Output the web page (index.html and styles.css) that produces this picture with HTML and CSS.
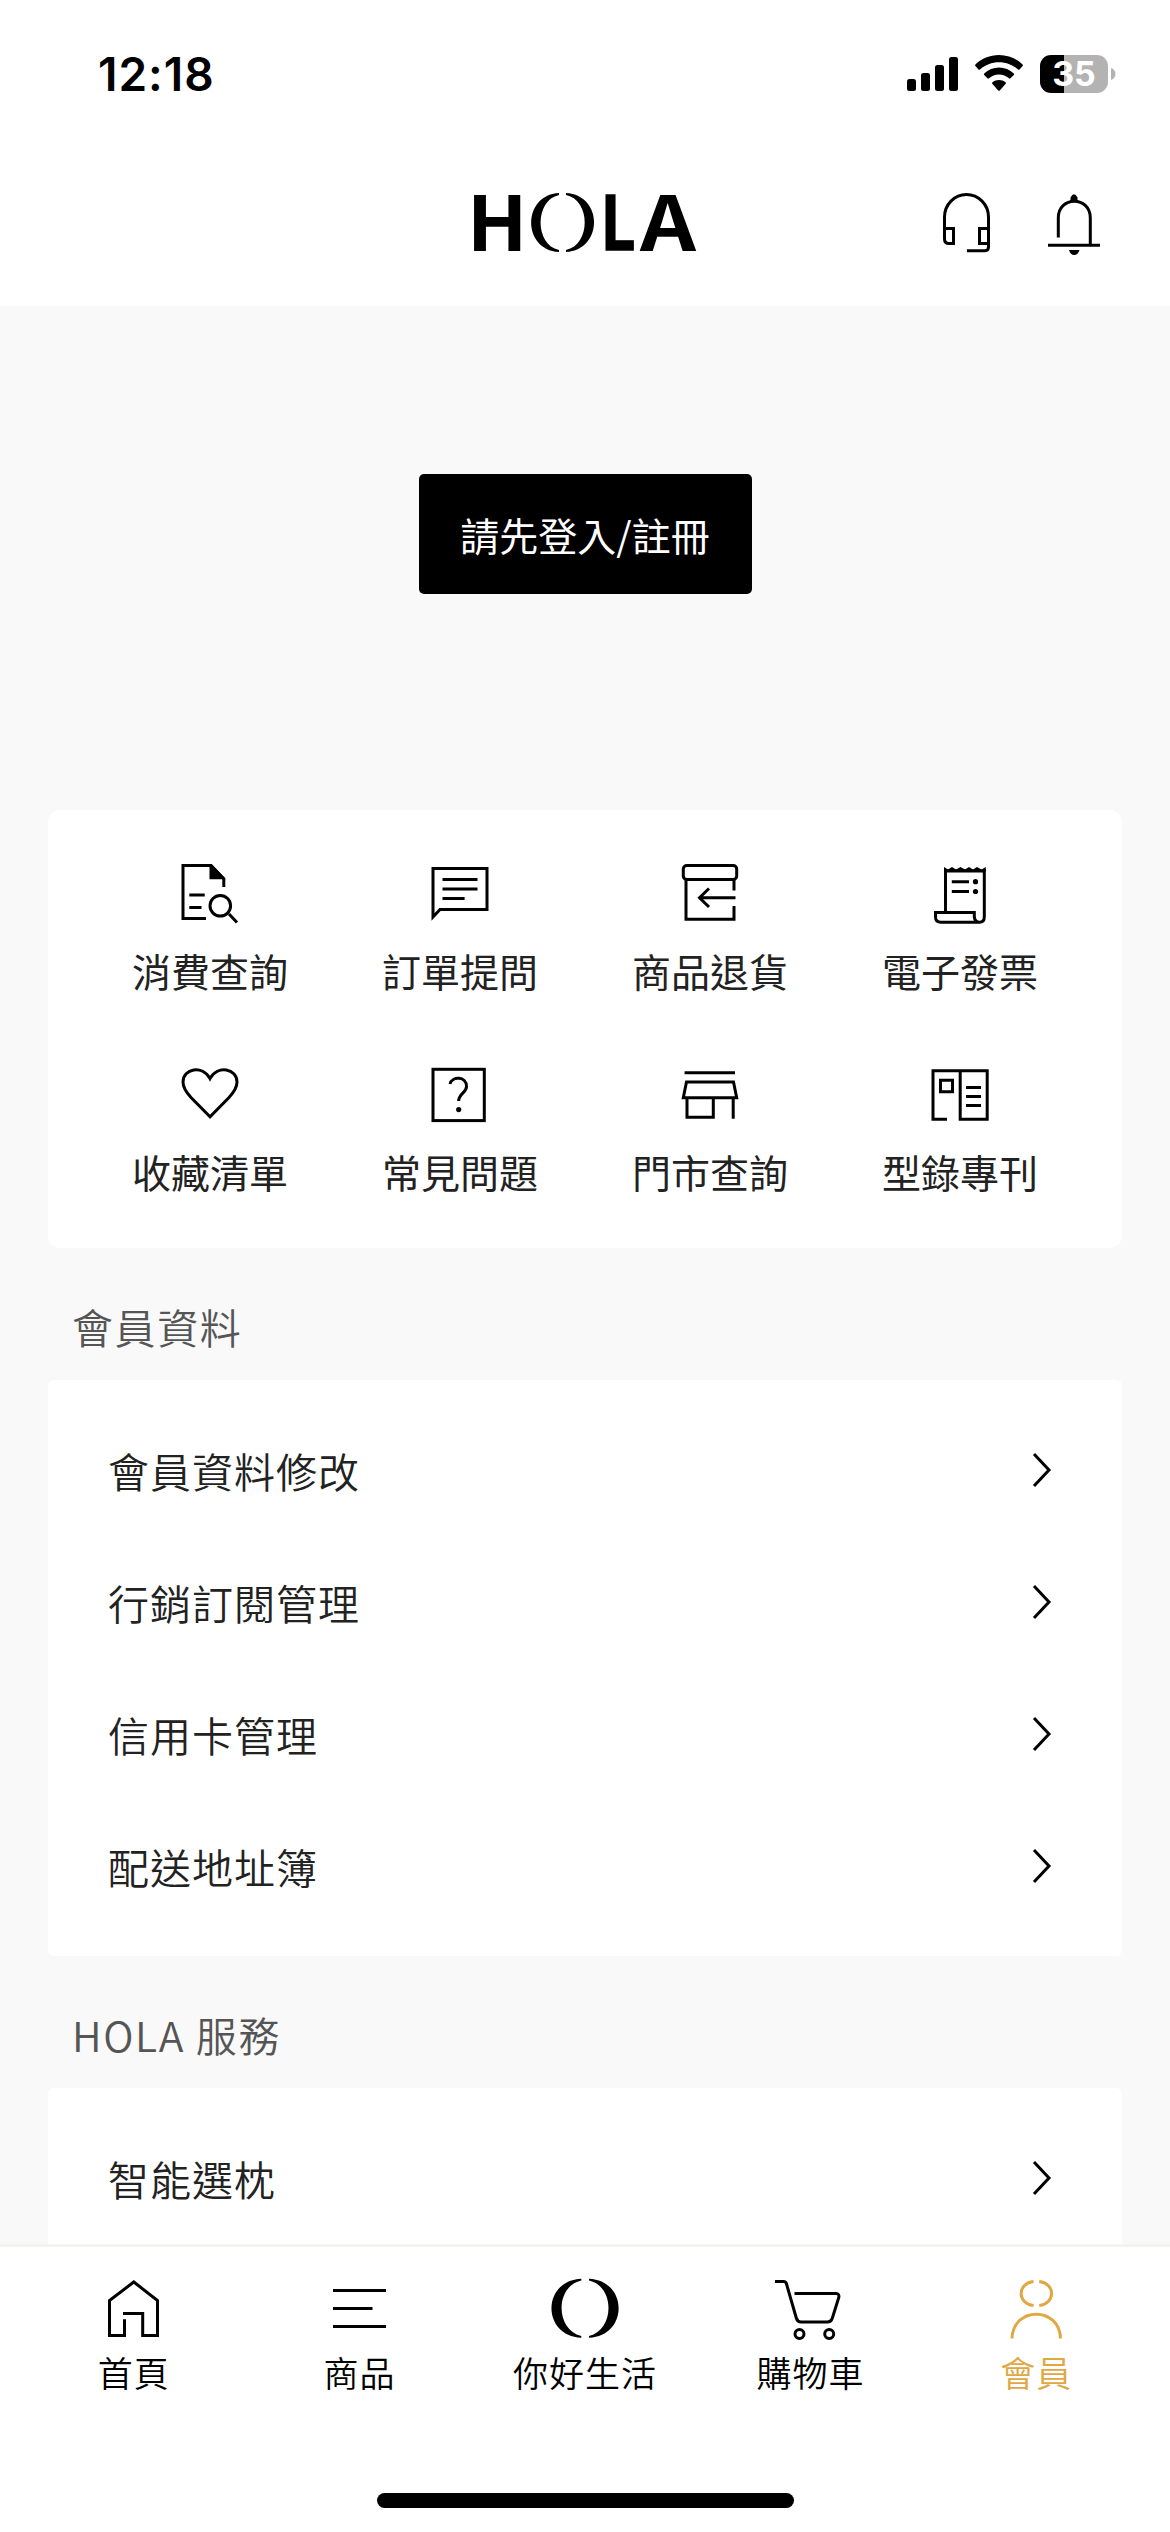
FILE: index.html
```html
<!DOCTYPE html>
<html lang="zh-Hant">
<head>
<meta charset="utf-8">
<title>HOLA 會員</title>
<link rel="stylesheet" href="styles.css">
</head>
<body>
<div class="screen">
  <header class="top">
    <div class="status">
      <span class="time">12:18</span>
      <div class="indicators">
        <svg class="signal" width="51" height="34" viewBox="0 0 51 34"><rect x="0" y="22" width="9" height="12" rx="2.5"/><rect x="14" y="16" width="9" height="18" rx="2.5"/><rect x="28" y="8" width="9" height="26" rx="2.5"/><rect x="42" y="0" width="9" height="34" rx="2.5"/></svg>
        <svg class="wifi" width="48" height="36" viewBox="0 0 48 36"><path d="M24 0C33 0 41.500 3.500 47.600 9.500Q48.300 10.300 47.600 11L44.500 14.500Q43.700 15.200 43 14.500C38 10 31 7.300 24 7.300S10 10 5 14.500Q4.300 15.200 3.500 14.500L.4 11Q-.3 10.300 .4 9.500C6.500 3.500 15 0 24 0Z"/><path d="M24 12.500C29.600 12.500 34.800 14.700 38.800 18.400Q39.600 19.200 38.800 20L35.500 23.300Q34.700 24 34 23.300C31.300 20.900 27.800 19.500 24 19.500S16.700 20.900 14 23.300Q13.300 24 12.500 23.300L9.200 20Q8.400 19.200 9.200 18.400C13.200 14.700 18.400 12.500 24 12.500Z"/><path d="M24 25C26.500 25 28.700 25.900 30.500 27.300Q31.300 28.200 30.500 29L24.800 35.500Q24 36.200 23.200 35.500L17.500 29Q16.700 28.200 17.500 27.300C19.300 25.900 21.500 25 24 25Z"/></svg>
        <div class="battery"><span class="cell">35</span><svg width="5" height="12" viewBox="0 0 5 12"><path d="M0 0C6 2 6 10 0 12Z"/></svg></div>
      </div>
    </div>
    <div class="brand-bar">
      <svg class="logo" width="250" height="130" viewBox="460 158 250 130" role="img" aria-label="HOLA">
        <text transform="translate(466.700 251) scale(1.057 1)">H</text>
        <path d="M559 193C522 195 522 250 559 252V250C534.500 245 534.500 200 559 195ZM566 193C603.500 195 603.500 250 566 252V250C591 245 591 200 566 195Z"/>
        <text class="bolder" transform="translate(600.400 250.400) scale(.8 .98)">L</text>
        <text transform="translate(640 251) scale(1.147 1)">A</text>
      </svg>
      <div class="actions">
        <svg class="line" width="60" height="66" viewBox="936 190 60 66"><path d="M944.500 228V217A22 22.500 0 0 1 988.500 217V247Q988.500 250.700 985 250.700H967M944.500 228.500H953.500V243.500H949Q944.500 243.500 944.500 239ZM988.500 228.500H979.500V243.500H988.500"/></svg>
        <svg class="line" width="60" height="66" viewBox="1044 190 60 66"><path d="M1058.300 237.500V218C1058.300 195.500 1090.300 195.500 1090.300 218V244M1048 245.300H1100"/><path class="solid" d="M1070.500 202V197.500Q1074 191 1077.500 197.500V202ZM1069 250H1079.500Q1078 255 1074.200 255T1069 250Z"/></svg>
      </div>
    </div>
  </header>

  <main class="content">
    <div class="login"><button class="login-btn">請先登入/註冊</button></div>

    <section class="shortcuts">
      <a class="shortcut"><svg class="line" width="60" height="64" viewBox="180 862 60 64"><path d="M206 918.500H183V865.500H211L223.800 879V887M189.300 895H204.700M189.300 907.500H201.500M229 914L237 922.500"/><circle cx="220.300" cy="905.800" r="10.300"/><path class="solid" d="M209.500 864H211.500L225.200 878V879.200H209.500Z"/></svg><span>消費查詢</span></a>
      <a class="shortcut"><svg class="line" width="60" height="64" viewBox="430 862 60 64"><path d="M433 868.500H487V909.500H440L433 917ZM442.500 879.500H477.500M442.500 889H477.500M442.500 898.500H464.600"/></svg><span>訂單提問</span></a>
      <a class="shortcut"><svg class="line" width="60" height="64" viewBox="680 862 60 64"><rect x="683.300" y="865.500" width="53.400" height="14" rx="3.500"/><path d="M686 880V919.300H734V906M734 880V890.500M735.500 897.700H699.500M709 888.500L699.500 897.700L709 907"/></svg><span>商品退貨</span></a>
      <a class="shortcut"><svg class="line" width="60" height="64" viewBox="930 862 60 64"><path d="M945.500 912V871H984.300V917Q984.300 922.300 979.500 922.300H941Q935.500 922.300 935.500 917V912.500H974.300V917Q975 922.300 979.500 922.300M951.800 881.700H969M951.800 891.500H969"/><path class="solid" d="M944 872V867L948 869.500L952 867L956 869.500L960.500 867L965 869.500L969 867L973 869.500L977 867L981.500 869.500L985.800 867V872Z"/><circle class="solid" cx="975.500" cy="881.700" r="2.600"/><circle class="solid" cx="975.500" cy="891.500" r="2.600"/></svg><span>電子發票</span></a>
      <a class="shortcut"><svg class="line" width="60" height="64" viewBox="180 1063 60 64"><path d="M210 1116.800L191 1097.500C185 1091 183 1086.500 183 1082C183 1068.500 202.500 1064.500 210 1078.500C217.500 1064.500 237 1068.500 237 1082C237 1086.500 235 1091 229 1097.500Z"/></svg><span>收藏清單</span></a>
      <a class="shortcut"><svg class="line" width="60" height="64" viewBox="430 1063 60 64"><rect x="433" y="1069.300" width="51.300" height="51.300"/><path d="M450 1084C452 1076 466.500 1076 466.500 1086.500C466.500 1093 458.700 1093.500 458.700 1101"/><circle class="solid" cx="458.700" cy="1109.600" r="2.600"/></svg><span>常見問題</span></a>
      <a class="shortcut"><svg class="line" width="60" height="64" viewBox="680 1063 60 64"><path d="M684.600 1072.700H735M686.500 1082H733.500L736.700 1097.800H683.300ZM687 1098V1117.300H713.300V1098M733.200 1098V1118.700"/></svg><span>門市查詢</span></a>
      <a class="shortcut"><svg class="line" width="60" height="64" viewBox="930 1063 60 64"><path d="M947 1119.200H933V1070.700H987.200V1119.200H960.200V1070.700M940.500 1080.200H952.500V1091.700H940.500ZM966 1087.500H981M966 1096.500H981M966 1105.500H981"/></svg><span>型錄專刊</span></a>
    </section>

    <h2 class="section-title">會員資料</h2>
    <section class="list">
      <a class="row"><span>會員資料修改</span><svg class="line" width="24" height="40" viewBox="0 0 24 40"><path d="M4 4L19 20L4 36"/></svg></a>
      <a class="row"><span>行銷訂閱管理</span><svg class="line" width="24" height="40" viewBox="0 0 24 40"><path d="M4 4L19 20L4 36"/></svg></a>
      <a class="row"><span>信用卡管理</span><svg class="line" width="24" height="40" viewBox="0 0 24 40"><path d="M4 4L19 20L4 36"/></svg></a>
      <a class="row"><span>配送地址簿</span><svg class="line" width="24" height="40" viewBox="0 0 24 40"><path d="M4 4L19 20L4 36"/></svg></a>
    </section>

    <h2 class="section-title">HOLA 服務</h2>
    <section class="list">
      <a class="row"><span>智能選枕</span><svg class="line" width="24" height="40" viewBox="0 0 24 40"><path d="M4 4L19 20L4 36"/></svg></a>
    </section>
  </main>

  <nav class="tabbar">
    <div class="tabs">
      <a class="tab"><svg class="line" width="72" height="66" viewBox="98 2275 72 66"><path d="M124.500 2319.300V2335.500H109.500V2300.500L133.800 2282L157.500 2300.500V2335.500H142.700V2313.500H123"/></svg><span>首頁</span></a>
      <a class="tab"><svg class="line" width="72" height="66" viewBox="323 2275 72 66"><path d="M333 2290.500H386M333 2308.500H372.500M333 2326.500H386"/></svg><span>商品</span></a>
      <a class="tab"><svg class="line" width="72" height="66" viewBox="549.500 2275 72 66"><path class="solid" d="M581.800 2278.700C542 2280.500 542 2336 581.800 2337.700V2336C555.500 2330 555.500 2286 581.800 2280.500ZM589.500 2278.700C629 2280.500 629 2336 589.500 2337.700V2336C615.500 2330 615.500 2286 589.500 2280.500Z"/></svg><span>你好生活</span></a>
      <a class="tab"><svg class="line" width="72" height="66" viewBox="774.500 2275 72 66"><path d="M774.500 2281.500H783Q785.500 2281.500 786 2284L795.800 2318Q797 2322 800.500 2322H827Q830.500 2322 831.700 2318.500L838.300 2297.500Q839 2293.500 835.500 2293.500H794"/><circle cx="799" cy="2334" r="4.500"/><circle cx="828.700" cy="2334" r="4.500"/></svg><span>購物車</span></a>
      <a class="tab active"><svg class="line" width="72" height="66" viewBox="1000 2275 72 66"><path d="M1033.500 2281.500C1017 2283.500 1017 2303.500 1033.500 2305.500M1039.200 2281.500C1055.700 2283.500 1055.700 2303.500 1039.200 2305.500M1012 2338.500C1013 2306 1059.500 2306 1060.500 2338.500"/></svg><span>會員</span></a>
    </div>
    <div class="home-indicator"></div>
  </nav>
</div>
</body>
</html>
```

FILE: styles.css
```css
* { box-sizing: border-box; }

body {
  margin: 0;
  background: #f9f9f9;
  color: #222;
  font-family: "Noto Sans CJK TC", "Noto Sans", sans-serif;
}

.screen {
  display: flex;
  flex-direction: column;
  width: 1170px;
  height: 2532px;
  overflow: hidden;
}

svg { display: block; flex: none; }

.line {
  fill: none;
  stroke: currentColor;
  stroke-width: 3;
  color: #000;
}

.solid { fill: currentColor; stroke: none; }

/* Header */
.top {
  flex: none;
  height: 306px;
  background: #fff;
  color: #000;
}

.status {
  display: flex;
  justify-content: space-between;
  height: 148px;
  padding: 47px 54px 0 98px;
  font-family: Inter, sans-serif;
}

.time {
  font-size: 46px;
  font-weight: 600;
  line-height: 55px;
  letter-spacing: 1px;
}

.indicators {
  display: flex;
  align-items: flex-start;
  padding-top: 8px;
}

.signal { margin: 2px 17px 0 0; }
.wifi { margin-right: 17px; }

.battery {
  display: flex;
  align-items: center;
  gap: 3px;
  fill: #b3b3b3;
}

.cell {
  width: 68px;
  height: 38px;
  border-radius: 11px;
  background: linear-gradient(90deg, #000 24px, #b3b3b3 24px);
  color: #fff;
  font-size: 34px;
  font-weight: 700;
  line-height: 38px;
  text-align: center;
}

.brand-bar {
  display: grid;
  grid-template-columns: 1fr 250px 1fr;
  align-items: center;
  height: 150px;
  padding: 0 66px;
}

.logo {
  grid-column: 2;
  font-family: "Noto Sans CJK TC", sans-serif;
  font-size: 76px;
  font-weight: 700;
}

.bolder { stroke: #000; stroke-width: 1.3; }

.actions {
  display: flex;
  justify-content: flex-end;
  gap: 48px;
}

/* Content */
.content {
  flex: 1;
  min-height: 0;
  overflow: hidden;
  padding: 0 48px;
}

.login {
  display: flex;
  justify-content: center;
  padding: 168px 0 216px;
}

.login-btn {
  width: 333px;
  height: 120px;
  padding: 0;
  border: 0;
  border-radius: 5px;
  background: #000;
  color: #fff;
  font: 400 39px/120px "Noto Sans CJK TC", sans-serif;
}

.shortcuts {
  display: grid;
  grid-template-columns: repeat(4, 250px);
  grid-auto-rows: 201px;
  justify-content: center;
  height: 438px;
  padding-top: 52px;
  border-radius: 12px;
  background: #fff;
}

.shortcut {
  display: flex;
  flex-direction: column;
  align-items: center;
  gap: 16px;
  font-size: 39px;
  font-weight: 400;
  line-height: 56px;
}

.section-title {
  height: 132px;
  margin: 0;
  padding: 46px 24px 0;
  color: #555;
  font-size: 41px;
  font-weight: 350;
  line-height: 64px;
  letter-spacing: 1.6px;
}

.list {
  padding: 24px 68px 24px 60px;
  border-radius: 6px;
  background: #fff;
}

.row {
  display: flex;
  align-items: center;
  justify-content: space-between;
  height: 132px;
  font-size: 41px;
  font-weight: 350;
  letter-spacing: 1px;
}

/* Bottom navigation */
.tabbar {
  flex: none;
  height: 288px;
  border-top: 3px solid #f4f4ee;
  background: #fff;
}

.tabs {
  display: grid;
  grid-template-columns: repeat(5, 1fr);
  height: 246px;
  padding: 28px 21px 0;
}

.tab {
  display: flex;
  flex-direction: column;
  align-items: center;
  gap: 5px;
  color: #000;
  font-size: 35px;
  font-weight: 350;
  line-height: 52px;
  letter-spacing: 1px;
}

.tab.active,
.tab.active .line { color: #e0a843; }

.home-indicator {
  width: 417px;
  height: 15px;
  margin: 0 auto;
  border-radius: 8px;
  background: #000;
}
```
